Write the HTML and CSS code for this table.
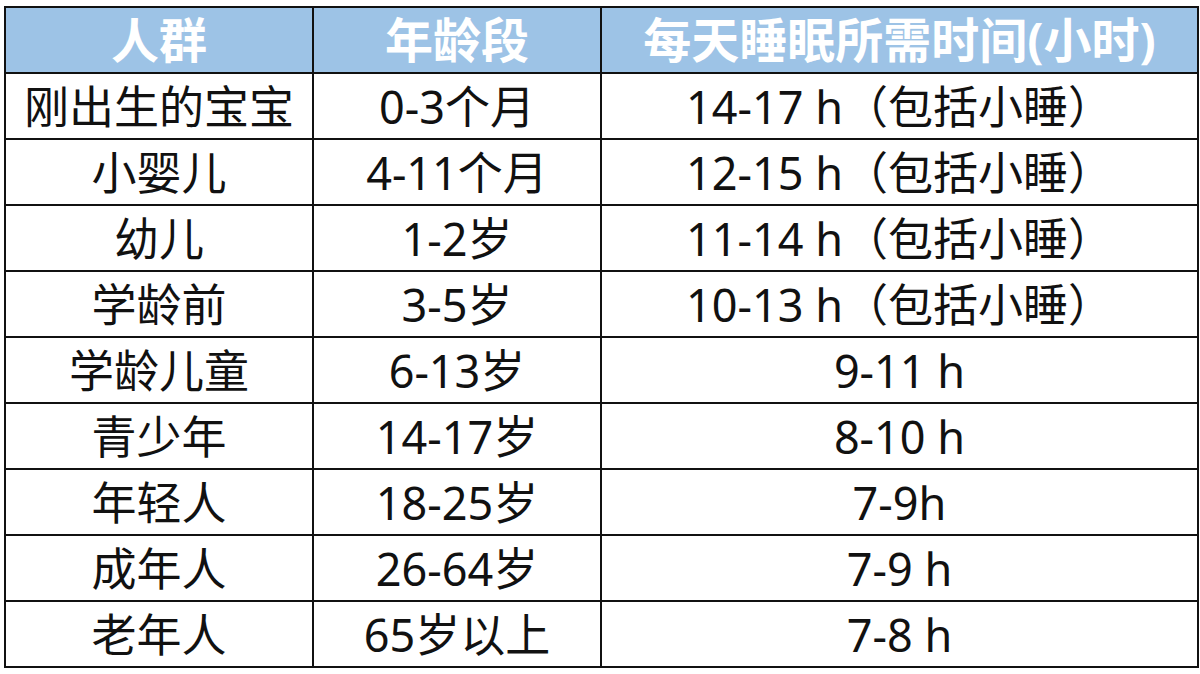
FILE: index.html
```html
<!DOCTYPE html>
<html lang="zh-CN">
<head>
<meta charset="utf-8">
<link rel="stylesheet" href="styles.css">
</head>
<body>
<table class="sleep">
  <colgroup>
    <col class="c1">
    <col class="c2">
    <col class="c3">
  </colgroup>
  <thead>
    <tr><th>人群</th><th>年龄段</th><th>每天睡眠所需时间(小时)</th></tr>
  </thead>
  <tbody>
    <tr><td>刚出生的宝宝</td><td>0-3个月</td><td>14-17 h（包括小睡）</td></tr>
    <tr><td>小婴儿</td><td>4-11个月</td><td>12-15 h（包括小睡）</td></tr>
    <tr><td>幼儿</td><td>1-2岁</td><td>11-14 h（包括小睡）</td></tr>
    <tr><td>学龄前</td><td>3-5岁</td><td>10-13 h（包括小睡）</td></tr>
    <tr><td>学龄儿童</td><td>6-13岁</td><td>9-11 h</td></tr>
    <tr><td>青少年</td><td>14-17岁</td><td>8-10 h</td></tr>
    <tr><td>年轻人</td><td>18-25岁</td><td>7-9h</td></tr>
    <tr><td>成年人</td><td>26-64岁</td><td>7-9 h</td></tr>
    <tr><td>老年人</td><td>65岁以上</td><td>7-8 h</td></tr>
  </tbody>
</table>
</body>
</html>
```

FILE: styles.css
```css
html, body {
  margin: 0;
  padding: 0;
  background: #ffffff;
}
body {
  padding: 6px 0 0 4px;
  font-family: "Noto Sans", "Noto Sans CJK SC", sans-serif;
}
.sleep {
  border-collapse: collapse;
  table-layout: fixed;
  width: 1193px;
}
.c1 { width: 308px; }
.c2 { width: 288px; }
.c3 { width: 597px; }
.sleep th,
.sleep td {
  border: 2px solid #111;
  padding: 0;
  height: 64px;
  text-align: center;
  vertical-align: middle;
  line-height: 1;
  white-space: nowrap;
}
.sleep th {
  background: #9dc3e6;
  color: #ffffff;
  font-weight: 700;
  font-size: 48px;
}
.sleep td {
  color: #111;
  font-weight: 400;
  font-size: 45px;
}
```
